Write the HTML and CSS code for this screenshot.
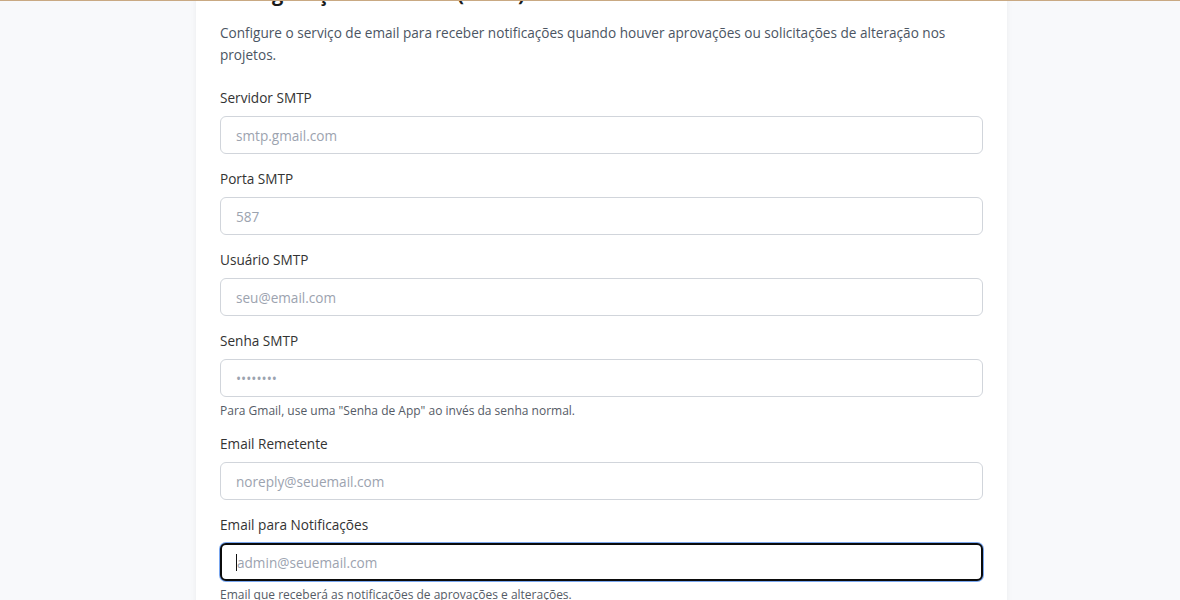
FILE: index.html
```html
<!DOCTYPE html>
<html lang="pt-BR">
<head>
<meta charset="utf-8">
<title>Configurações de Email (SMTP)</title>
<link rel="stylesheet" href="styles.css">
</head>
<body>
<div class="topbar"></div>
<div class="viewport">
  <div class="card">
    <h2 class="card-title">Configurações de Email (SMTP)</h2>
    <p class="card-desc">Configure o serviço de email para receber notificações quando houver aprovações ou solicitações de alteração nos projetos.</p>

    <div class="field">
      <label class="field-label">Servidor SMTP</label>
      <input class="field-input" type="text" placeholder="smtp.gmail.com">
    </div>
    <div class="field">
      <label class="field-label">Porta SMTP</label>
      <input class="field-input" type="text" placeholder="587">
    </div>
    <div class="field">
      <label class="field-label">Usuário SMTP</label>
      <input class="field-input" type="text" placeholder="seu@email.com">
    </div>
    <div class="field">
      <label class="field-label">Senha SMTP</label>
      <input class="field-input" type="password" placeholder="••••••••">
      <p class="field-hint">Para Gmail, use uma "Senha de App" ao invés da senha normal.</p>
    </div>
    <div class="field">
      <label class="field-label">Email Remetente</label>
      <input class="field-input" type="text" placeholder="noreply@seuemail.com">
    </div>
    <div class="field">
      <label class="field-label">Email para Notificações</label>
      <div class="field-input is-focused"><span class="caret"></span><span class="ph">admin@seuemail.com</span></div>
      <p class="field-hint">Email que receberá as notificações de aprovações e alterações.</p>
    </div>
  </div>
</div>
</body>
</html>
```
FILE: styles.css
```css
* { box-sizing: border-box; }
html, body { margin: 0; padding: 0; }
body {
  background: #f8f9fb;
  font-family: "Open Sans", "Noto Sans", sans-serif;
  color: #333333;
  height: 600px;
  overflow: hidden;
}
.topbar {
  height: 1px;
  background: #c9a983;
  position: relative;
  z-index: 2;
}
.viewport {
  height: 599px;
  overflow: hidden;
}
.card {
  width: 811px;
  margin: -43px 0 0 196px;
  background: #ffffff;
  padding: 24px 24px 40px;
  box-shadow: 0 1px 6px rgba(0,0,0,0.06);
}
.card-title {
  margin: 0 0 16px;
  font-size: 20px;
  line-height: 24px;
  font-weight: 700;
  color: #1a1a1a;
}
.card-desc {
  margin: 0 0 22px;
  font-size: 13.6px;
  line-height: 22px;
  color: #4b5563;
}
.field { margin-bottom: 15px; }
.field-label {
  display: block;
  font-size: 13.6px;
  line-height: 20px;
  margin-bottom: 8px;
  color: #333333;
}
.field-input {
  display: block;
  width: 100%;
  height: 38px;
  border: 1px solid #d1d5db;
  border-radius: 6px;
  padding: 0 15px;
  font-family: inherit;
  font-size: 13.6px;
  color: #333333;
  background: #ffffff;
  outline: none;
}
.field-input::placeholder { color: #9ca3af; }
.field-input.is-focused {
  border: 2px solid #0b0b0b;
  box-shadow: 0 0 0 1px #7aa7f0;
  display: flex;
  align-items: center;
  padding: 0 14px;
}
.caret {
  width: 1px;
  height: 17px;
  background: #111111;
}
.ph { color: #9ca3af; font-size: 13.6px; }
.field-hint {
  margin: 5px 0 0;
  font-size: 12px;
  line-height: 17px;
  color: #555b66;
}
```
